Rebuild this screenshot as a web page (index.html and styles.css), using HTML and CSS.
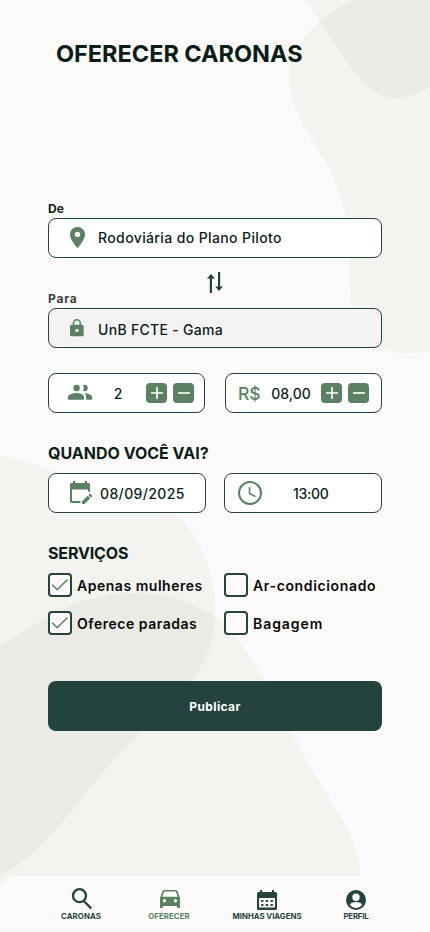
FILE: index.html
```html
<!DOCTYPE html>
<html lang="pt-BR">
<head>
<meta charset="utf-8">
<meta name="viewport" content="width=device-width, initial-scale=1">
<title>Oferecer caronas</title>
<link rel="stylesheet" href="styles.css">
</head>
<body>
<div class="screen">
  <svg class="backdrop" viewBox="0 0 430 932" aria-hidden="true">
    <path d="M352 0C335 11 330 13 320 22C303 36 289 54 289 79C289 103 305 130 322 156C337 180 349 212 349 250C349 278 350 294 352 308C357 340 378 353 405 353C414 353 423 352 430 351V0Z"/>
    <path d="M304 0C309 7 314 13 320 22C333 40 345 60 357 75C370 91 382 98 396 98C409 98 420 92 430 86V0Z"/>
    <path d="M0 455C20 459 39 465 55 472C103 484 147 491 175 514C199 534 215 572 215 607C215 638 208 662 191 681C175 697 158 715 142 731C121 750 105 770 87 792C60 825 34 860 0 875Z"/>
    <path d="M0 645C30 629 42 619 67 607C88 598 110 592 132 593C165 592 190 601 216 617C235 631 249 656 265 681C276 697 283 714 292 731C301 750 310 766 320 783C330 800 338 812 347 828C355 843 360 859 361 876V910C360 918 357 926 355 932H0Z"/>
  </svg>

  <main class="content">
    <h1 class="title">OFERECER CARONAS</h1>

    <div class="label label-from">De</div>
    <div class="field place">
      <svg class="icon" width="24" height="26" viewBox="0 0 24 26"><path fill-rule="evenodd" d="M12.500 2C8.300 2 5 5.200 5 9.400 5 14.800 12.500 23 12.500 23S20 14.800 20 9.400C20 5.200 16.700 2 12.500 2zm0 4.700a2.700 2.700 0 1 1 0 5.400 2.700 2.700 0 0 1 0-5.400z"/></svg>
      <span class="t-from">Rodoviária do Plano Piloto</span>
    </div>

    <div class="swap-row">
      <span class="label label-to">Para</span>
      <svg class="swap" width="16" height="21" viewBox="0 0 16 21"><path d="M2.800 21V6.500H0L4 2 8 6.500H5V21ZM11 0h2.200v14.500H16L12 19 8.200 14.500H11Z"/></svg>
    </div>
    <div class="field place locked">
      <svg class="icon lock" width="24" height="24" viewBox="0 0 24 24"><path fill-rule="evenodd" d="M17.200 8.700h-1.100V7.200a4.200 4.200 0 0 0-8.400 0v1.500H6.500A1.500 1.500 0 0 0 5 10.200v8.500a1.500 1.500 0 0 0 1.500 1.500h10.700a1.500 1.500 0 0 0 1.500-1.500v-8.500a1.500 1.500 0 0 0-1.500-1.500zm-8 0V7.200a2.700 2.700 0 0 1 5.400 0v1.500zM11.900 12.700a1.800 1.800 0 1 1 0 3.600 1.800 1.800 0 0 1 0-3.600z"/></svg>
      <span class="t-to">UnB FCTE - Gama</span>
    </div>

    <div class="pair counters">
      <div class="field counter seats">
        <svg class="icon" width="24" height="24" viewBox="0 1 24 24"><path d="M16.500 11.200a3.200 3.200 0 1 0 0-6.400q-.9 0-1.600.4a5 5 0 0 1 0 5.600q.7.4 1.600.4zM8.600 11.200a3.200 3.200 0 1 0 0-6.400 3.200 3.200 0 0 0 0 6.400zM8.600 13C5.800 13 0 14.300 0 17v2.700h16V17c0-2.700-4.700-4-7.400-4zM16 13.100c1.300 1 2.100 2.200 2.100 3.900v2.700H24V17c0-2.300-4.300-3.600-8-3.900z"/></svg>
        <span class="value">2</span>
        <span class="step"><svg width="21" height="20" viewBox="0 0 21 20"><path d="M11 4v12M5 10h12"/></svg></span>
        <span class="step"><svg width="21" height="20" viewBox="0 0 21 20"><path d="M5 10h12"/></svg></span>
      </div>
      <div class="field counter price">
        <span class="currency">R$</span>
        <span class="value">08,00</span>
        <span class="step"><svg width="21" height="20" viewBox="0 0 21 20"><path d="M11 4v12M5 10h12"/></svg></span>
        <span class="step"><svg width="21" height="20" viewBox="0 0 21 20"><path d="M5 10h12"/></svg></span>
      </div>
    </div>

    <h2 class="heading when">QUANDO VOCÊ VAI?</h2>
    <div class="pair dates">
      <div class="field date">
        <svg class="icon" width="24" height="24" viewBox="0 0 24 24"><path fill-rule="evenodd" d="M4 0h2v2h10V0h2v2h1.500A1.500 1.500 0 0 1 21 3.500V11l-2-.5V8.500H3v11.500h8.500v2H2.500A1.500 1.500 0 0 1 1 20.500V3.500A1.500 1.500 0 0 1 2.500 2H4zM13 20.500l5.700-5.700 2.500 2.500-5.700 5.700H13zM19.400 14.100l1.200-1.200q.4-.4.800 0l1.700 1.700q.4.400 0 .8l-1.200 1.200z"/></svg>
        <span class="t-date">08/09/2025</span>
      </div>
      <div class="field time">
        <svg class="clock" width="24" height="24" viewBox="0 0 24 24"><circle cx="12" cy="12" r="11"/><path d="M11.500 6v6.500l6 3.200"/></svg>
        <span class="t-time">13:00</span>
      </div>
    </div>

    <h2 class="heading services">SERVIÇOS</h2>
    <div class="options">
      <div class="option"><span class="box"><svg width="20" height="20" viewBox="0 0 20 20"><path d="M2.200 9.700l5 5L17.500 4.500"/></svg></span><span class="o-women">Apenas mulheres</span></div>
      <div class="option"><span class="box"></span><span class="o-air">Ar-condicionado</span></div>
      <div class="option"><span class="box"><svg width="20" height="20" viewBox="0 0 20 20"><path d="M2.200 9.700l5 5L17.500 4.500"/></svg></span><span class="o-stops">Oferece paradas</span></div>
      <div class="option"><span class="box"></span><span class="o-bags">Bagagem</span></div>
    </div>

    <button class="publish" type="button">Publicar</button>
  </main>

  <nav class="tabs">
    <a class="tab">
      <svg width="24" height="24" viewBox="0 0 24 24"><path class="stroke" d="M15 14.200L22.200 21.400"/><circle class="stroke" cx="10.500" cy="8.700" r="6.500"/></svg>
      <span class="n-rides">CARONAS</span>
    </a>
    <a class="tab active">
      <svg width="24" height="24" viewBox="-1 0 24 24"><path fill-rule="evenodd" d="M19.800 4.500Q19.300 3 17.800 3H6.200Q4.700 3 4.200 4.500L2 11v9.200q0 .8.800.8h1.500q.8 0 .8-.8V19h13.800v1.200q0 .8.800.8h1.500q.8 0 .8-.8V11zM6.500 15.500a1.700 1.700 0 1 1 0-3.400 1.700 1.700 0 0 1 0 3.400zm11 0a1.700 1.700 0 1 1 0-3.400 1.700 1.700 0 0 1 0 3.400zM4.300 9.700L6.100 4.500h11.800l1.800 5.200z"/></svg>
      <span class="n-offer">OFERECER</span>
    </a>
    <a class="tab">
      <svg width="24" height="24" viewBox="0 0 24 24"><path fill-rule="evenodd" d="M5 3h2v2h10V3h2v2h1.500Q22 5 22 6.500v15q0 1.500-1.500 1.500h-17Q2 23 2 21.500v-15Q2 5 3.500 5H5zM4 11v9.500h16V11zM6.200 13h2.200v2H6.200zm4.700 0h2.200v2h-2.200zm4.700 0h2.200v2h-2.200zM6.200 17h2.200v2H6.200zm4.700 0h2.200v2h-2.200zm4.700 0h2.200v2h-2.200z"/></svg>
      <span class="n-trips">MINHAS VIAGENS</span>
    </a>
    <a class="tab">
      <svg width="24" height="24" viewBox="0 0 24 24"><path fill-rule="evenodd" d="M12 3a10 10 0 1 0 0 20 10 10 0 0 0 0-20zm0 3.500a3.700 3.700 0 1 1 0 7.400 3.700 3.700 0 0 1 0-7.400zM12 21c-2.600 0-5-1.300-6.200-3.200.8-2 4.200-2.700 6.200-2.700s5.400.7 6.200 2.700C17 19.700 14.600 21 12 21z"/></svg>
      <span class="n-profile">PERFIL</span>
    </a>
  </nav>
</div>
</body>
</html>
```
FILE: styles.css
```css
* { box-sizing: border-box; }

body {
  margin: 0;
  background: #fcfbf9;
  font-family: "Inter", sans-serif;
  color: #0b1d19;
}

.screen {
  position: relative;
  width: 430px;
  height: 932px;
  overflow: hidden;
  display: flex;
  flex-direction: column;
}

.backdrop {
  position: absolute;
  inset: 0;
  z-index: -1;
  width: 430px;
  height: 932px;
  fill: rgba(38, 60, 20, 0.044);
}

.content { flex: 1; padding: 36px 48px 0; }

.title, .heading { margin: 0; font-weight: 700; white-space: nowrap; }
.title { padding-left: 8px; font-size: 23.5px; line-height: 36px; letter-spacing: -0.02px; }

.label { display: block; font-size: 12px; line-height: 18px; font-weight: 700; }
.label-from { margin-top: 128px; }

.field {
  display: flex;
  align-items: center;
  height: 40px;
  border: 1px solid #24433f;
  border-radius: 8px;
  background: #fff;
  font-size: 14px;
  font-weight: 500;
  white-space: nowrap;
}

.place { padding-left: 16px; gap: 9px; }
.locked { background: #f3f3f3; }
.icon { flex: none; fill: #5b8162; }
.t-from { padding-bottom: 2px; letter-spacing: 0.38px; }
.t-to { padding-top: 2px; letter-spacing: 0.3px; }

.swap-row { display: grid; grid-template-columns: 1fr 16px 1fr; height: 50px; }
.label-to { align-self: end; color: #38403e; letter-spacing: 0.8px; }
.swap { margin-top: 14px; fill: #24433f; }

.pair { display: flex; justify-content: space-between; }
.counters { margin-top: 25px; }
.counter { width: 157px; padding-right: 10px; }
.seats { padding-left: 19px; }
.price { padding-left: 12px; padding-right: 12px; }
.value { flex: 1; text-align: center; }
.seats .value { padding-right: 2px; }
.currency { width: 23px; font-size: 17.5px; color: #5b8162; }
.step { width: 21px; height: 20px; border-radius: 4px; background: #5b8162; }
.step + .step { margin-left: 6px; }
.step svg { display: block; fill: none; stroke: #fff; stroke-width: 1.6; }

.heading { font-size: 16px; line-height: 24px; }
.when { margin-top: 28px; }
.dates { margin-top: 8px; }
.date, .time { width: 158px; }
.date { padding-left: 20px; gap: 7px; }
.t-date { letter-spacing: 0.38px; }
.time { padding-left: 13px; gap: 31px; }
.t-time { letter-spacing: -0.3px; }
.clock { fill: none; stroke: #5b8162; stroke-width: 2; }
.clock path { stroke-width: 1.5; }

.services { margin-top: 28px; letter-spacing: -0.15px; }
.options { display: grid; grid-template-columns: 176px 1fr; row-gap: 14px; margin-top: 8px; }
.option {
  display: flex;
  align-items: center;
  gap: 5px;
  font-size: 14px;
  font-weight: 600;
  letter-spacing: 0.52px;
  color: #090909;
  white-space: nowrap;
}
.o-air { letter-spacing: 0.64px; }
.o-bags { letter-spacing: 0.95px; }
.box {
  flex: none;
  width: 24px;
  height: 24px;
  border: 2px solid #24433f;
  border-radius: 4px;
  background: #fcfbf9;
}
.box svg { display: block; fill: none; stroke: #5b8162; stroke-width: 1.5; }

.publish {
  display: block;
  width: 100%;
  height: 50px;
  margin-top: 46px;
  padding: 0;
  border: 0;
  border-radius: 8px;
  background: #24433f;
  color: #fff;
  font: 700 12px "Inter", sans-serif;
  letter-spacing: 0.4px;
}

.tabs {
  display: grid;
  grid-template-columns: 66px 110px 86px 92px;
  justify-content: start;
  height: 55px;
  margin-bottom: 1px;
  padding: 11px 0 0 48px;
  border-radius: 16px 0 0 0;
  background: #fcfbf9;
}
.tab {
  display: flex;
  flex-direction: column;
  align-items: center;
  color: #24433f;
  font-size: 7.8px;
  line-height: 12px;
  font-weight: 700;
  white-space: nowrap;
}
.tab svg { margin-bottom: -1px; fill: currentColor; }
.n-rides, .n-offer { letter-spacing: 0.08px; }
.active { color: #5b8162; }
.n-profile { letter-spacing: -0.15px; }
.tab .stroke { fill: none; stroke: currentColor; stroke-width: 2.3; }
```
